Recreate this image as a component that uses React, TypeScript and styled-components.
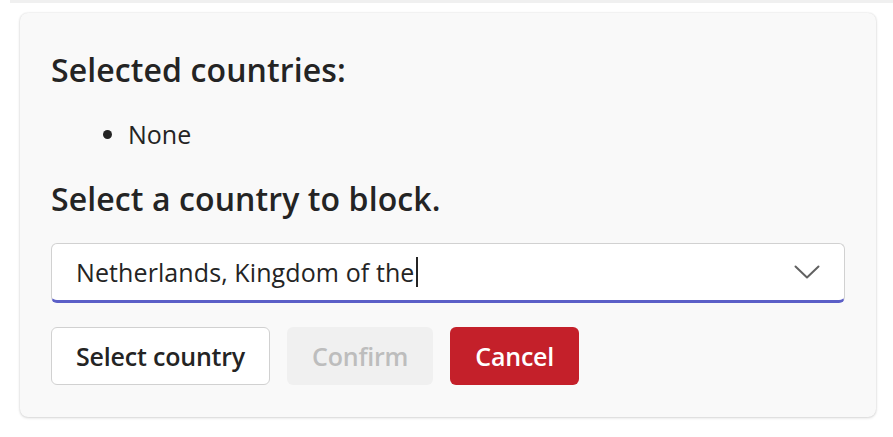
import React from 'react';
import styled, { createGlobalStyle } from 'styled-components';

const GlobalStyle = createGlobalStyle`
  html, body {
    margin: 0;
    padding: 0;
    background: #ffffff;
    font-family: "Open Sans", "Noto Sans", sans-serif;
    color: #242424;
  }
`;

const Page = styled.div`
  width: 893px;
  height: 437px;
  overflow: hidden;
  display: flex;
  flex-direction: column;
`;

const TopStrip = styled.div`
  height: 3px;
  margin-left: 10px;
  background: #f0f0f0;
`;

const Card = styled.section`
  margin: 10px 17px 0 20px;
  height: 404px;
  box-sizing: border-box;
  padding: 36px 31px 0 31px;
  background: #f9f9f9;
  border-radius: 8px;
  box-shadow: 0 0 2px rgba(0, 0, 0, 0.12), 0 1px 3px rgba(0, 0, 0, 0.14);
`;

const Heading = styled.h2`
  margin: 0;
  font-size: 32px;
  font-weight: 600;
  line-height: 42px;
  letter-spacing: 0.1px;
`;

const List = styled.ul`
  margin: 25px 0 26px 0;
  padding-left: 77px;
  font-size: 25px;
  line-height: 36px;
`;

const Field = styled.div`
  margin-top: 23px;
  height: 60px;
  box-sizing: border-box;
  display: flex;
  align-items: center;
  padding: 0 24px;
  background: #ffffff;
  border: 1px solid #d1d1d1;
  border-bottom: 3px solid #5b5fc7;
  border-radius: 6px;
`;

const FieldText = styled.div`
  flex: 1;
  font-size: 25px;
  letter-spacing: 0.1px;
  color: #242424;
  display: flex;
  align-items: center;
`;

const Caret = styled.span`
  display: inline-block;
  width: 2px;
  height: 30px;
  background: #242424;
  margin-left: 1px;
`;

const Actions = styled.div`
  display: flex;
  gap: 17px;
  margin-top: 24px;
`;

type Variant = 'default' | 'disabled' | 'danger';

const Button = styled.button<{ $variant: Variant }>`
  height: 58px;
  box-sizing: border-box;
  padding: 0 24px;
  border-radius: 6px;
  font-family: "Open Sans", "Noto Sans", sans-serif;
  font-size: 25px;
  font-weight: 600;
  letter-spacing: -0.2px;
  border: 1px solid
    ${p => (p.$variant === 'default' ? '#d1d1d1' : 'transparent')};
  background: ${p =>
    p.$variant === 'danger' ? '#c4202a' : p.$variant === 'disabled' ? '#f0f0f0' : '#ffffff'};
  color: ${p =>
    p.$variant === 'danger' ? '#ffffff' : p.$variant === 'disabled' ? '#bdbdbd' : '#242424'};
`;

export default function App() {
  return (
    <Page>
      <GlobalStyle />
      <TopStrip />
      <Card>
        <Heading>Selected countries:</Heading>
        <List>
          <li>None</li>
        </List>
        <Heading>Select a country to block.</Heading>
        <Field>
          <FieldText>
            Netherlands, Kingdom of the
            <Caret />
          </FieldText>
          <svg width="26" height="14" viewBox="0 0 26 14" fill="none">
            <path d="M1.5 1.5 L13 12.5 L24.5 1.5" stroke="#616161" strokeWidth="2" strokeLinecap="round" strokeLinejoin="round" />
          </svg>
        </Field>
        <Actions>
          <Button $variant="default">Select country</Button>
          <Button $variant="disabled" disabled>Confirm</Button>
          <Button $variant="danger">Cancel</Button>
        </Actions>
      </Card>
    </Page>
  );
}
